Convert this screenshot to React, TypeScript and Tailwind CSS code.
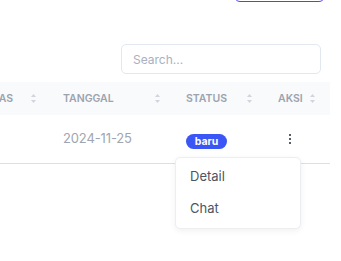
function SortIcon() {
  return (
    <svg width="7" height="11" viewBox="0 0 7 11" className="shrink-0">
      <path d="M3.5 1 L6 4 L1 4 Z" fill="#d1d5db" />
      <path d="M3.5 10 L6 7 L1 7 Z" fill="#d1d5db" />
    </svg>
  );
}

function HeadCell({ label, width, pr = "pr-[9px]" }: { label: string; width: string; pr?: string }) {
  return (
    <div className={`flex items-center justify-between pl-4 ${pr} ${width}`}>
      <span className="text-[10.5px] font-semibold uppercase text-[#9ca3af]">{label}</span>
      <SortIcon />
    </div>
  );
}

export default function App() {
  return (
    <main
      className="relative h-[261px] w-[341px] overflow-hidden bg-white"
      style={{ fontFamily: "Inter, 'Liberation Sans', sans-serif" }}
    >
      <div className="flex justify-end pr-4">
        <div className="-mt-[32px] h-[34px] w-[91px] rounded-md border border-[#5046e5]" />
      </div>

      <div className="mt-[42px] flex justify-end pr-5">
        <input
          placeholder="Search..."
          className="h-[30px] w-[200px] rounded-[5px] border border-[#e2e8f0] px-[11px] text-[12px] text-[#4b5563] outline-none placeholder:text-[#a8b1c2]"
        />
      </div>

      <div className="mt-2 -ml-[37px] w-[367px]">
        <div className="flex h-[33px] bg-[#f9fafb]">
          <HeadCell label="Kelas" width="w-[84px]" pr="pr-[10px]" />
          <HeadCell label="Tanggal" width="w-[123px]" />
          <HeadCell label="Status" width="w-[92px]" />
          <HeadCell label="Aksi" width="w-[68px]" pr="pr-[14px]" />
        </div>
        <div className="flex h-[49px] items-center border-b border-[#dcdfe4]">
          <div className="w-[84px]" />
          <div className="w-[123px] pl-4 text-[13px] tracking-[-0.01em] text-[#a0a6b1]">2024-11-25</div>
          <div className="w-[92px] pl-4">
            <span className="inline-flex h-[15px] w-[41px] items-center justify-center rounded-full bg-[#3a56f5] text-[10.5px] font-bold text-white">
              baru
            </span>
          </div>
          <div className="relative w-[68px] pl-[26px]">
            <div className="flex w-[3px] flex-col items-center gap-[2px]">
              <span className="h-[2px] w-[2px] rounded-full bg-[#1f2937]" />
              <span className="h-[2px] w-[2px] rounded-full bg-[#1f2937]" />
              <span className="h-[2px] w-[2px] rounded-full bg-[#1f2937]" />
            </div>
            <div className="absolute left-[-87px] top-[23px] w-[126px] rounded-[5px] border border-[#eceef1] bg-white py-[3px] shadow-[0_2px_6px_rgba(0,0,0,0.06)]">
              <div className="flex h-8 items-center px-[14px] text-[13px] text-[#4b5563]">Detail</div>
              <div className="flex h-8 items-center px-[14px] text-[13px] text-[#4b5563]">Chat</div>
            </div>
          </div>
        </div>
      </div>
    </main>
  );
}
